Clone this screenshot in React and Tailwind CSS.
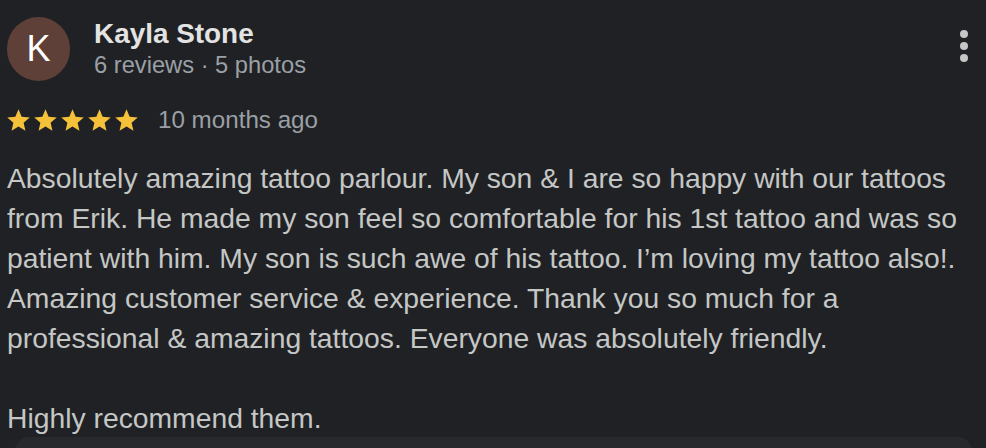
import { useState } from "react";

const review = {
	name: "Kayla Stone",
	initial: "K",
	meta: "6 reviews · 5 photos",
	rating: 5,
	when: "10 months ago",
	paragraphs: [
		"Absolutely amazing tattoo parlour. My son & I are so happy with our tattoos from Erik. He made my son feel so comfortable for his 1st tattoo and was so patient with him. My son is such awe of his tattoo. I’m loving my tattoo also!. Amazing customer service & experience. Thank you so much for a professional & amazing tattoos. Everyone was absolutely friendly.",
		"Highly recommend them.",
	],
};

const Star = () => (
	<svg width="27" height="27" viewBox="0 0 24 24" className="shrink-0">
		<path
			fill="#f5c13b"
			d="M12 17.27L18.18 21l-1.64-7.03L22 9.24l-7.19-.61L12 2 9.19 8.63 2 9.24l5.46 4.73L5.82 21z"
		/>
	</svg>
);

const MoreButton = () => (
	<button className="ml-auto mt-[13px] mr-[14px] flex h-[32px] w-[16px] flex-col items-center justify-between py-0">
		<span className="h-[8px] w-[8px] rounded-full bg-[#c4c7c5]" />
		<span className="h-[8px] w-[8px] rounded-full bg-[#c4c7c5]" />
		<span className="h-[8px] w-[8px] rounded-full bg-[#c4c7c5]" />
	</button>
);

const App = () => {
	const [open] = useState(true);

	return (
		<div
			className="h-[448px] w-[986px] overflow-hidden bg-[#202124] pl-[7px]"
			style={{ fontFamily: '"Liberation Sans", Arial, sans-serif' }}
		>
			<div className="flex items-start pt-[17px]">
				<div className="flex h-[64px] w-[63px] shrink-0 items-center justify-center rounded-full bg-[#5e4038] text-[36px] leading-none text-white">
					{review.initial}
				</div>
				<div className="ml-[24px] flex flex-col pt-[1px]">
					<div className="text-[27.9px] font-bold leading-[32px] text-[#e3e3e3]">
						{review.name}
					</div>
					<div className="text-[23.7px] leading-[30px] text-[#9aa0a6]">
						{review.meta}
					</div>
				</div>
				<MoreButton />
			</div>

			<div className="mt-[23px] flex h-[32px] items-center">
				<div className="flex -ml-[2px]">
					{Array.from({ length: review.rating }).map((_, i) => (
						<Star key={i} />
					))}
				</div>
				<span className="ml-[18px] text-[24.2px] leading-[32px] text-[#9aa0a6]">
					{review.when}
				</span>
			</div>

			{open && (
				<div className="mt-[22px] w-[975px] text-[28.3px] leading-[40px] text-[#c4c7c5]">
					{review.paragraphs.map((p, i) => (
						<p key={i} className={i > 0 ? "mt-[40px]" : ""}>
							{p}
						</p>
					))}
				</div>
			)}

			<div className="ml-[8px] mt-[-1px] h-[40px] w-[957px] rounded-t-[14px] bg-[#28292c]" />
		</div>
	);
};

export default App;
